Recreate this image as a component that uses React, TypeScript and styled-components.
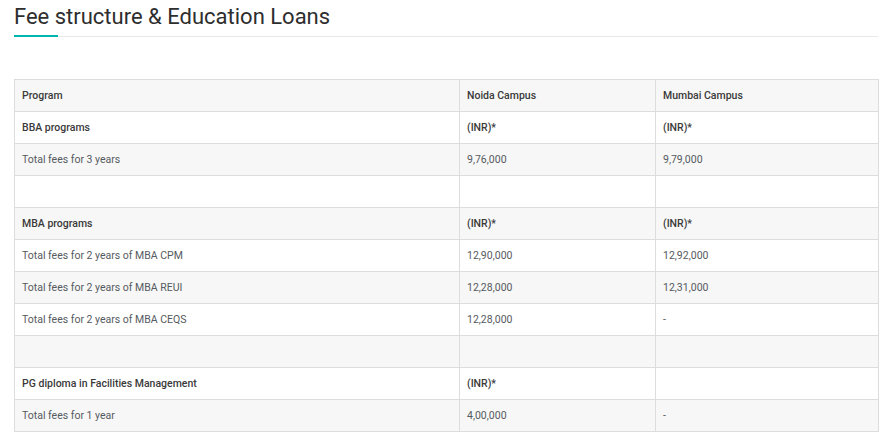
import React from "react";
import styled, { createGlobalStyle } from "styled-components";

const GlobalStyle = createGlobalStyle`
  body {
    margin: 0;
    background: #ffffff;
    font-family: Roboto, "Liberation Sans", sans-serif;
  }
`;

const Page = styled.div`
  padding: 0 1px 0 14px;
`;

const Title = styled.h2`
  margin: 0;
  padding-top: 4px;
  font-size: 22px;
  font-weight: 400;
  line-height: 26px;
  color: #2e2e2e;
  letter-spacing: 0;
`;

const Divider = styled.div`
  margin-top: 5px;
  height: 2px;
  display: flex;
  align-items: flex-end;
`;

const Accent = styled.div`
  width: 44px;
  height: 2px;
  background: #00b5ad;
`;

const Rule = styled.div`
  flex: 1;
  height: 1px;
  background: #e8e8e8;
`;

const Table = styled.table`
  margin-top: 42px;
  width: 864px;
  border-collapse: collapse;
  table-layout: fixed;
  font-size: 10.5px;
`;

const Row = styled.tr<{ $shade: boolean }>`
  height: 32px;
  background: ${({ $shade }) => ($shade ? "#f7f7f7" : "#ffffff")};
`;

const Cell = styled.td<{ $strong?: boolean }>`
  border: 1px solid #dddddd;
  padding: 0 7px;
  color: ${({ $strong }) => ($strong ? "#3a3a3a" : "#555a60")};
  font-weight: ${({ $strong }) => ($strong ? 500 : 400)};
  white-space: nowrap;
`;

type Line = { cells: string[]; strong?: boolean[] };

const rows: Line[] = [
  { cells: ["Program", "Noida Campus", "Mumbai Campus"], strong: [true, true, true] },
  { cells: ["BBA programs", "(INR)*", "(INR)*"], strong: [true, true, true] },
  { cells: ["Total fees for 3 years", "9,76,000", "9,79,000"] },
  { cells: ["", "", ""] },
  { cells: ["MBA programs", "(INR)*", "(INR)*"], strong: [true, true, true] },
  { cells: ["Total fees for 2 years of MBA CPM", "12,90,000", "12,92,000"] },
  { cells: ["Total fees for 2 years of MBA REUI", "12,28,000", "12,31,000"] },
  { cells: ["Total fees for 2 years of MBA CEQS", "12,28,000", "-"] },
  { cells: ["", "", ""] },
  { cells: ["PG diploma in Facilities Management", "(INR)*", ""], strong: [true, true, true] },
  { cells: ["Total fees for 1 year", "4,00,000", "-"] },
];

export default function App() {
  return (
    <Page>
      <GlobalStyle />
      <Title>Fee structure &amp; Education Loans</Title>
      <Divider>
        <Accent />
        <Rule />
      </Divider>
      <Table>
        <colgroup>
          <col style={{ width: 445 }} />
          <col style={{ width: 196 }} />
          <col style={{ width: 223 }} />
        </colgroup>
        <tbody>
          {rows.map((row, i) => (
            <Row key={i} $shade={i % 2 === 0}>
              {row.cells.map((text, j) => (
                <Cell key={j} $strong={row.strong?.[j]}>
                  {text}
                </Cell>
              ))}
            </Row>
          ))}
        </tbody>
      </Table>
    </Page>
  );
}
